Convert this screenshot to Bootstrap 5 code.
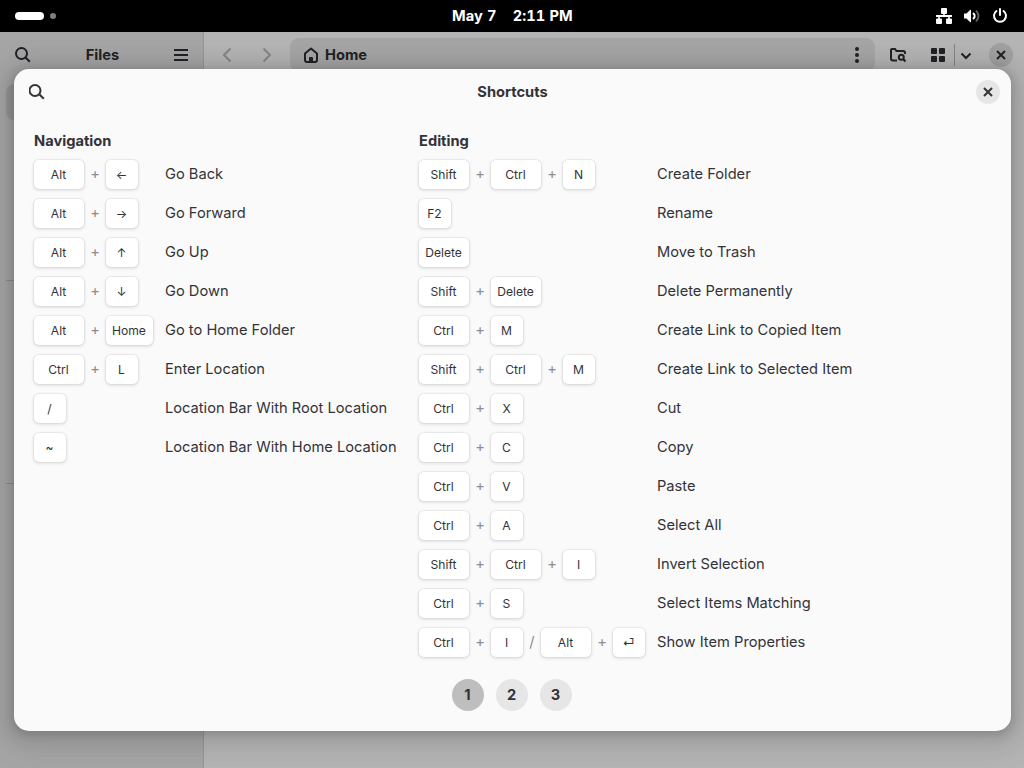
<!DOCTYPE html>
<html lang="en">
<head>
<meta charset="utf-8">
<title>Shortcuts</title>
<link href="https://cdn.jsdelivr.net/npm/bootstrap@5.3.0/dist/css/bootstrap.min.css" rel="stylesheet">
<style>
body{font-family:Inter,"Noto Sans",sans-serif;font-size:14.667px;line-height:18px;color:#333337;width:1024px;height:768px}
svg{display:block;flex:none}
.topbar{height:32px;background:#000;padding:0 16px 0 15px}
.topbar .pill{width:29px;height:8px;border-radius:4px;background:#fff}
.topbar .dot{width:6px;height:6px;border-radius:3px;background:#808080;margin-left:6px}
.topbar .clock{left:452px;top:7px;gap:16px;font-variant-numeric:tabular-nums;letter-spacing:.1px}
.sidebar{width:204px;background:#a5a5a5;border-right:1px solid #959595;color:#222226}
.headbar{height:46px;color:#222226}
.place{height:36px;margin:6px 6px 0;border-radius:8px;background:#969696}
.rule{height:1px;margin:0 6px;background:#8d8d8d}
.content{background:#b4b4b4}
.pathbar{width:585px;height:34px;border-radius:9px;background:#a5a5a5;padding:0 13px 0 13px}
.round{width:24px;height:24px;border-radius:50%}
.dialog{left:14px;top:69px;width:997px;height:662px;border-radius:15px;background:#fafafb;box-shadow:0 2px 8px 2px rgba(0,0,0,.13),0 3px 20px 10px rgba(0,0,0,.09),0 6px 32px 16px rgba(0,0,0,.04)}
.dialog .headbar{color:#333337}
.keys{padding:12px 20px 0}
.group h2{font-size:14.667px;line-height:18px;margin:5px 0 10px;font-weight:700}
.shortcut{height:29px;margin-bottom:10px}
.shortcut>span{padding-bottom:1px}
.combo{color:#8d8d90}
.nav-group .combo{width:131px}
.edit-group .combo{width:238px}
.nav-group{width:385px}
.shortcut kbd{display:flex;align-items:center;justify-content:center;height:29px;min-width:32px;padding:0 7px 0 6px;border-radius:5px;background:#fff;color:#333337;font-family:inherit;font-size:12.1px;line-height:17px;box-shadow:0 0 0 1px rgba(0,0,6,.04),0 1px 3px 1px rgba(0,0,6,.09)}
.shortcut kbd.wide{min-width:50px}
.shortcut .join{width:22px;text-align:center;padding-bottom:1px}
.shortcut .or{width:18px;text-align:center;padding-bottom:1px}
.pager{gap:12px;margin:12px 2px 0 0}
.pager span{width:32px;height:32px;border-radius:50%;background:#e6e6e7;font-weight:700}
.pager .current{background:#bebebf}
</style>
</head>
<body class="position-relative overflow-hidden d-flex flex-column">
<header class="topbar d-flex align-items-center text-white">
  <span class="pill"></span><span class="dot"></span>
  <div class="clock position-absolute d-flex fw-bold"><span>May 7</span><span>2:11 PM</span></div>
  <div class="ms-auto d-flex align-items-center" style="gap:12px">
    <svg width="16" height="16" fill="currentColor"><rect x="5" y="0" width="6" height="6" rx="1"/><rect x="0" y="10.5" width="6" height="5.5" rx="1"/><rect x="10" y="10.5" width="6" height="5.5" rx="1"/><path d="M7.2 5h1.600v2H16v2h-2.200v3h-1.600V9H3.800v3H2.200V9H0V7h7.200z"/></svg>
    <svg width="16" height="16" fill="currentColor"><path d="M0 5.500h2.500L6 2q1-.7 1 .5v11q0 1.200-1 .5L2.500 10.500H0z"/><path d="M9 5q3.400 3 0 6" fill="none" stroke="#fff" stroke-width="2"/><path d="M12 2.500q5 5.500 0 11" fill="none" stroke="#666" stroke-width="1.800"/></svg>
    <svg width="16" height="16" fill="none" stroke="currentColor" stroke-width="2"><path d="M4.500 3A6 6 0 1 0 11.500 3M8 1v6" stroke-linecap="round"/></svg>
  </div>
</header>
<main class="d-flex flex-grow-1">
  <aside class="sidebar">
    <div class="headbar d-flex align-items-center justify-content-between" style="padding:0 15px">
      <svg width="16" height="16" fill="none" stroke="currentColor" stroke-width="2"><circle cx="6.500" cy="6.500" r="5.500"/><path d="M10.500 10.500l4.300 4.300"/></svg>
      <strong>Files</strong>
      <svg width="14" height="12" fill="currentColor"><path d="M0 0h14v2H0zM0 5h14v2H0zM0 10h14v2H0z"/></svg>
    </div>
    <div class="place"></div>
    <div class="rule" style="margin-top:160px"></div>
    <div class="rule" style="margin-top:202px"></div>
  </aside>
  <section class="content flex-grow-1">
    <div class="headbar d-flex align-items-center">
      <svg width="86" height="16" fill="none" stroke="#858585" stroke-width="2"><path d="M26.500 1.500L20 8l6.500 6.500M59.500 1.500L66 8l-6.500 6.500"/></svg>
      <div class="pathbar d-flex align-items-center">
        <svg width="16" height="16"><path d="M2 6.500L8 1.500l6 5V13q0 2-2 2H4q-2 0-2-2z" fill="none" stroke="currentColor" stroke-width="2" stroke-linejoin="round"/><path d="M6 15v-4q0-1 1-1h2q1 0 1 1v4z" fill="currentColor"/></svg>
        <strong style="margin-left:6px">Home</strong>
        <svg class="ms-auto" width="10" height="16" fill="currentColor"><circle cx="5" cy="2" r="2"/><circle cx="5" cy="8" r="2"/><circle cx="5" cy="14" r="2"/></svg>
      </div>
      <svg width="16" height="16" style="margin-left:15px" fill="none" stroke="currentColor" stroke-width="2"><path d="M7 13.500H3q-2 0-2-2V3q0-1 1-1h3l1.500 2H13q2 0 2 2v1"/><circle cx="11.300" cy="10.300" r="2.500"/><path d="M13 12l2.500 2.500"/></svg>
      <svg width="14" height="14" style="margin-left:25px" fill="currentColor"><rect width="6" height="6" rx="1"/><rect x="8" width="6" height="6" rx="1"/><rect y="8" width="6" height="6" rx="1"/><rect x="8" y="8" width="6" height="6" rx="1"/></svg>
      <span style="width:1px;height:22px;background:#858585;margin-left:9px"></span>
      <svg width="12" height="8" style="margin:1px 0 0 5px" fill="none" stroke="currentColor" stroke-width="2"><path d="M1.500 1.500L6 6l4.500-4.500"/></svg>
      <span class="round d-flex align-items-center justify-content-center" style="background:#a0a0a0;margin-left:17px"><svg width="10" height="10" stroke="currentColor" stroke-width="2"><path d="M1 1l8 8M9 1L1 9"/></svg></span>
    </div>
  </section>
</main>

<div class="dialog position-absolute">
  <div class="headbar d-flex align-items-center justify-content-between" style="padding:0 11px 0 15px">
    <svg width="16" height="16" style="margin-top:-1px" fill="none" stroke="currentColor" stroke-width="2"><circle cx="6" cy="6.500" r="5.500"/><path d="M10.500 10.500l4.300 4.300"/></svg>
    <strong style="margin-left:4px">Shortcuts</strong>
    <span class="round d-flex align-items-center justify-content-center" style="background:#e6e6e7"><svg width="10" height="10" stroke="currentColor" stroke-width="2"><path d="M1 1l8 8M9 1L1 9"/></svg></span>
  </div>
  <div class="keys d-flex">
    <div class="group nav-group">
      <h2>Navigation</h2>
      <div class="shortcut d-flex align-items-center"><div class="combo d-flex align-items-center"><kbd class="wide">Alt</kbd><span class="join">+</span><kbd>←</kbd></div><span>Go Back</span></div>
      <div class="shortcut d-flex align-items-center"><div class="combo d-flex align-items-center"><kbd class="wide">Alt</kbd><span class="join">+</span><kbd>→</kbd></div><span>Go Forward</span></div>
      <div class="shortcut d-flex align-items-center"><div class="combo d-flex align-items-center"><kbd class="wide">Alt</kbd><span class="join">+</span><kbd>↑</kbd></div><span>Go Up</span></div>
      <div class="shortcut d-flex align-items-center"><div class="combo d-flex align-items-center"><kbd class="wide">Alt</kbd><span class="join">+</span><kbd>↓</kbd></div><span>Go Down</span></div>
      <div class="shortcut d-flex align-items-center"><div class="combo d-flex align-items-center"><kbd class="wide">Alt</kbd><span class="join">+</span><kbd>Home</kbd></div><span>Go to Home Folder</span></div>
      <div class="shortcut d-flex align-items-center"><div class="combo d-flex align-items-center"><kbd class="wide">Ctrl</kbd><span class="join">+</span><kbd>L</kbd></div><span>Enter Location</span></div>
      <div class="shortcut d-flex align-items-center"><div class="combo d-flex align-items-center"><kbd>/</kbd></div><span>Location Bar With Root Location</span></div>
      <div class="shortcut d-flex align-items-center"><div class="combo d-flex align-items-center"><kbd>~</kbd></div><span>Location Bar With Home Location</span></div>
    </div>
    <div class="group edit-group">
      <h2>Editing</h2>
      <div class="shortcut d-flex align-items-center"><div class="combo d-flex align-items-center"><kbd class="wide">Shift</kbd><span class="join">+</span><kbd class="wide">Ctrl</kbd><span class="join">+</span><kbd>N</kbd></div><span>Create Folder</span></div>
      <div class="shortcut d-flex align-items-center"><div class="combo d-flex align-items-center"><kbd>F2</kbd></div><span>Rename</span></div>
      <div class="shortcut d-flex align-items-center"><div class="combo d-flex align-items-center"><kbd class="wide">Delete</kbd></div><span>Move to Trash</span></div>
      <div class="shortcut d-flex align-items-center"><div class="combo d-flex align-items-center"><kbd class="wide">Shift</kbd><span class="join">+</span><kbd class="wide">Delete</kbd></div><span>Delete Permanently</span></div>
      <div class="shortcut d-flex align-items-center"><div class="combo d-flex align-items-center"><kbd class="wide">Ctrl</kbd><span class="join">+</span><kbd>M</kbd></div><span>Create Link to Copied Item</span></div>
      <div class="shortcut d-flex align-items-center"><div class="combo d-flex align-items-center"><kbd class="wide">Shift</kbd><span class="join">+</span><kbd class="wide">Ctrl</kbd><span class="join">+</span><kbd>M</kbd></div><span>Create Link to Selected Item</span></div>
      <div class="shortcut d-flex align-items-center"><div class="combo d-flex align-items-center"><kbd class="wide">Ctrl</kbd><span class="join">+</span><kbd>X</kbd></div><span>Cut</span></div>
      <div class="shortcut d-flex align-items-center"><div class="combo d-flex align-items-center"><kbd class="wide">Ctrl</kbd><span class="join">+</span><kbd>C</kbd></div><span>Copy</span></div>
      <div class="shortcut d-flex align-items-center"><div class="combo d-flex align-items-center"><kbd class="wide">Ctrl</kbd><span class="join">+</span><kbd>V</kbd></div><span>Paste</span></div>
      <div class="shortcut d-flex align-items-center"><div class="combo d-flex align-items-center"><kbd class="wide">Ctrl</kbd><span class="join">+</span><kbd>A</kbd></div><span>Select All</span></div>
      <div class="shortcut d-flex align-items-center"><div class="combo d-flex align-items-center"><kbd class="wide">Shift</kbd><span class="join">+</span><kbd class="wide">Ctrl</kbd><span class="join">+</span><kbd>I</kbd></div><span>Invert Selection</span></div>
      <div class="shortcut d-flex align-items-center"><div class="combo d-flex align-items-center"><kbd class="wide">Ctrl</kbd><span class="join">+</span><kbd>S</kbd></div><span>Select Items Matching</span></div>
      <div class="shortcut d-flex align-items-center"><div class="combo d-flex align-items-center"><kbd class="wide">Ctrl</kbd><span class="join">+</span><kbd>I</kbd><span class="or">/</span><kbd class="wide">Alt</kbd><span class="join">+</span><kbd>⏎</kbd></div><span>Show Item Properties</span></div>
    </div>
  </div>
  <div class="pager d-flex justify-content-center">
    <span class="current d-flex align-items-center justify-content-center">1</span>
    <span class="d-flex align-items-center justify-content-center">2</span>
    <span class="d-flex align-items-center justify-content-center">3</span>
  </div>
</div>
<script src="https://cdn.jsdelivr.net/npm/bootstrap@5.3.0/dist/js/bootstrap.bundle.min.js"></script>
</body>
</html>
